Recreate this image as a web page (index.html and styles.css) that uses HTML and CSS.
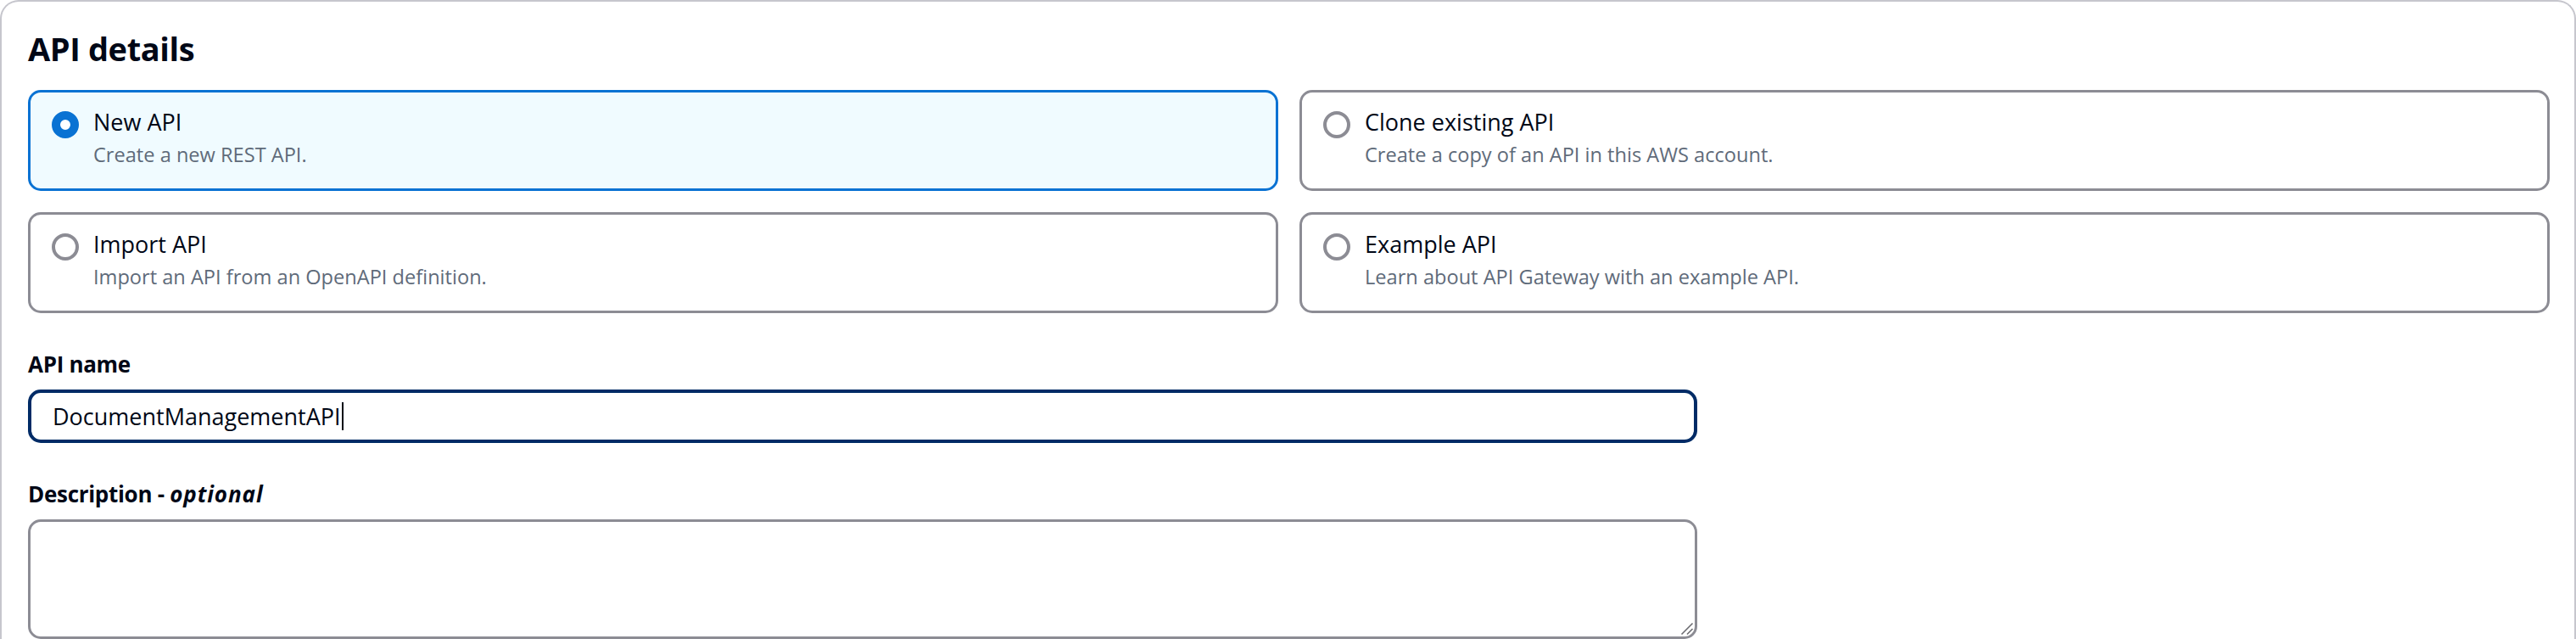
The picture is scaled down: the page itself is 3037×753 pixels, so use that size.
FILE: index.html
```html
<!DOCTYPE html>
<html lang="en">
<head>
<meta charset="utf-8">
<title>API details</title>
<link rel="stylesheet" href="styles.css">
</head>
<body>
<section class="panel">
  <h2 class="panel-title">API details</h2>
  <div class="tiles">
    <div class="tile tile-selected">
      <span class="radio radio-checked"></span>
      <div class="tile-text">
        <div class="tile-label">New API</div>
        <div class="tile-desc">Create a new REST API.</div>
      </div>
    </div>
    <div class="tile">
      <span class="radio"></span>
      <div class="tile-text">
        <div class="tile-label">Clone existing API</div>
        <div class="tile-desc">Create a copy of an API in this AWS account.</div>
      </div>
    </div>
    <div class="tile">
      <span class="radio"></span>
      <div class="tile-text">
        <div class="tile-label">Import API</div>
        <div class="tile-desc">Import an API from an OpenAPI definition.</div>
      </div>
    </div>
    <div class="tile">
      <span class="radio"></span>
      <div class="tile-text">
        <div class="tile-label">Example API</div>
        <div class="tile-desc">Learn about API Gateway with an example API.</div>
      </div>
    </div>
  </div>

  <div class="field">
    <div class="field-label">API name</div>
    <div class="input input-focused" role="textbox"><span class="input-value">DocumentManagementAPI</span><span class="caret"></span></div>
  </div>

  <div class="field">
    <div class="field-label">Description - <i>optional</i></div>
    <div class="textarea-wrap">
      <textarea class="textarea"></textarea>
      <svg class="resizer" width="16" height="16" viewBox="0 0 16 16" aria-hidden="true">
        <line x1="1.5" y1="14.5" x2="14.5" y2="1.5" stroke="#6b6b70" stroke-width="1.6"/>
        <line x1="8" y1="14.5" x2="14.5" y2="8" stroke="#6b6b70" stroke-width="1.6"/>
      </svg>
    </div>
  </div>
</section>
</body>
</html>
```

FILE: styles.css
```css
html, body {
  margin: 0;
  padding: 0;
  background: #ffffff;
  overflow: hidden;
}

body {
  font-family: "Open Sans", "Noto Sans", "Liberation Sans", sans-serif;
  color: #000716;
}

.panel {
  border: 2px solid #c6c6cd;
  border-bottom: none;
  border-radius: 22px 22px 0 0;
  padding: 31px 29px 0 31px;
  height: 753px;
  box-sizing: border-box;
}

.panel-title {
  margin: 0 0 25px 0;
  font-size: 38px;
  line-height: 48px;
  font-weight: 700;
  letter-spacing: -0.4px;
  color: #000716;
}

.tiles {
  display: grid;
  grid-template-columns: 1fr 1fr;
  gap: 25px;
}

.tile {
  display: flex;
  align-items: flex-start;
  gap: 17px;
  border: 3px solid #8c8c94;
  border-radius: 15px;
  padding: 16px 25px 23px 25px;
  background: #ffffff;
}

.tile-selected {
  border-color: #0972d3;
  background: #f0fbff;
}

.radio {
  flex: 0 0 auto;
  width: 32px;
  height: 32px;
  margin-top: 6px;
  box-sizing: border-box;
  border-radius: 50%;
  border: 4px solid #8c8c94;
  background: #ffffff;
}

.radio-checked {
  border: 10px solid #0972d3;
}

.tile-label {
  font-size: 27px;
  line-height: 38px;
  color: #000716;
}

.tile-desc {
  margin-top: 2px;
  font-size: 23.6px;
  line-height: 34px;
  color: #5f6b7a;
}

.field {
  margin-top: 40px;
  width: 1968px;
}

.field-label {
  position: relative;
  top: 1px;
  font-size: 26px;
  line-height: 38px;
  font-weight: 700;
  letter-spacing: -0.3px;
  color: #000716;
  margin-bottom: 12px;
}

.field-label i {
  font-style: italic;
  letter-spacing: 0.9px;
}

.input {
  display: flex;
  align-items: center;
  box-sizing: border-box;
  height: 63px;
  border: 4px solid #002b66;
  border-radius: 15px;
  padding: 0 25px;
  background: #ffffff;
}

.input-value {
  font-size: 27px;
  line-height: 38px;
  color: #000716;
}

.caret {
  display: inline-block;
  width: 2px;
  height: 33px;
  margin-left: 1px;
  background: #000716;
}

.textarea-wrap {
  position: relative;
}

.textarea {
  display: block;
  box-sizing: border-box;
  width: 100%;
  height: 141px;
  margin: 0;
  border: 3px solid #8c8c94;
  border-radius: 15px;
  padding: 8px 25px;
  font-family: "Open Sans", "Noto Sans", "Liberation Sans", sans-serif;
  font-size: 27px;
  background: #ffffff;
  outline: none;
  resize: none;
}

.resizer {
  position: absolute;
  right: 4px;
  bottom: 4px;
}
```
